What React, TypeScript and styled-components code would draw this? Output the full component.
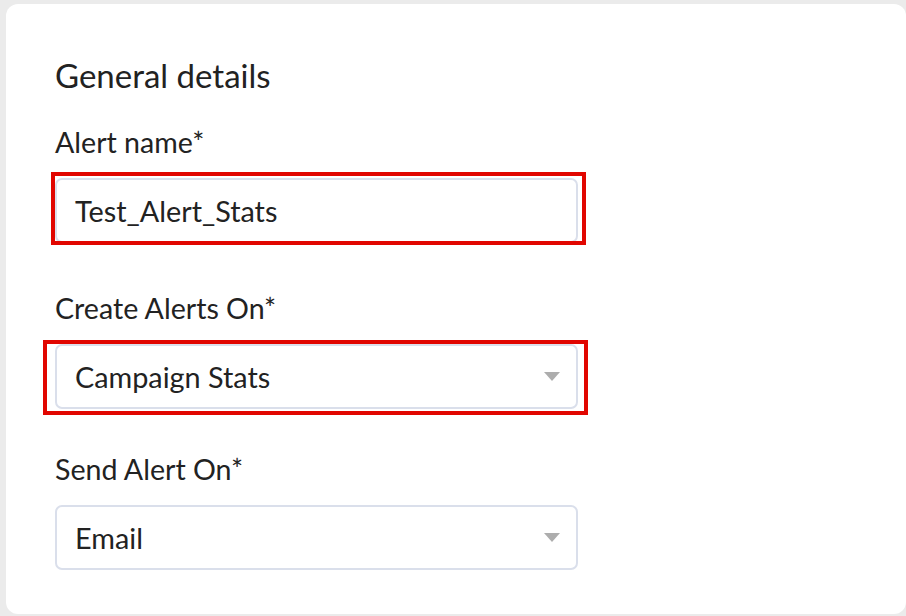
import React from "react";
import styled, { createGlobalStyle } from "styled-components";

const GlobalStyle = createGlobalStyle`
  html, body {
    margin: 0;
    padding: 0;
    background: #ebebeb;
    font-family: "Lato", "Open Sans", sans-serif;
    color: #222222;
  }
  #root {
    min-height: 616px;
  }
`;

type FieldProps = {
  label: string;
  value: string;
  select?: boolean;
  top: number;
  mark?: { l: number; t: number; r: number; b: number };
};

const Field = ({ label, value, select, top, mark }: FieldProps) => (
  <FieldWrap top={top}>
    <Label>{label}</Label>
    <InputBox>
      <Value>{value}</Value>
      {select && <Caret />}
      {mark && (
        <Highlight
          style={{
            left: -mark.l,
            top: -mark.t,
            right: -mark.r,
            bottom: -mark.b,
          }}
        />
      )}
    </InputBox>
  </FieldWrap>
);

const App = () => {
  return (
    <>
      <GlobalStyle />
      <Page>
        <Card>
          <Heading>General details</Heading>
          <Field
            top={33}
            label="Alert name*"
            value="Test_Alert_Stats"
            mark={{ l: 6, t: 8, r: 10, b: 4 }}
          />
          <Field
            top={49}
            label="Create Alerts On*"
            value="Campaign Stats"
            select
            mark={{ l: 14, t: 6, r: 12, b: 8 }}
          />
          <Field top={44} label="Send Alert On*" value="Email" select />
        </Card>
      </Page>
    </>
  );
};

export default App;

const Page = styled.div`
  padding: 4px 0 2px 6px;
  height: 616px;
  box-sizing: border-box;
  overflow: hidden;
`;

const Card = styled.div`
  background: #ffffff;
  border-radius: 12px;
  height: 610px;
  padding: 53px 0 0 49px;
  box-sizing: border-box;
  display: flex;
  flex-direction: column;
`;

const Heading = styled.h2`
  margin: 0;
  font-size: 33px;
  font-weight: 400;
  line-height: 36px;
  color: #222222;
`;

const FieldWrap = styled.div<{ top: number }>`
  margin-top: ${(p) => p.top}px;
  display: flex;
  flex-direction: column;
  gap: 20px;
`;

const Label = styled.label`
  font-size: 28.6px;
  line-height: 32px;
  color: #222222;
`;

const InputBox = styled.div`
  position: relative;
  width: 523px;
  height: 65px;
  box-sizing: border-box;
  border: 2px solid #dadfeb;
  border-radius: 7px;
  padding: 0 18px;
  display: flex;
  align-items: center;
  justify-content: space-between;
`;

const Value = styled.span`
  font-size: 28.8px;
  color: #222222;
`;

const Caret = styled.span`
  width: 0;
  height: 0;
  border-left: 8px solid transparent;
  border-right: 8px solid transparent;
  border-top: 9px solid #adadad;
  margin-right: -2px;
`;

const Highlight = styled.div`
  position: absolute;
  border: 4px solid #e10600;
  pointer-events: none;
`;
